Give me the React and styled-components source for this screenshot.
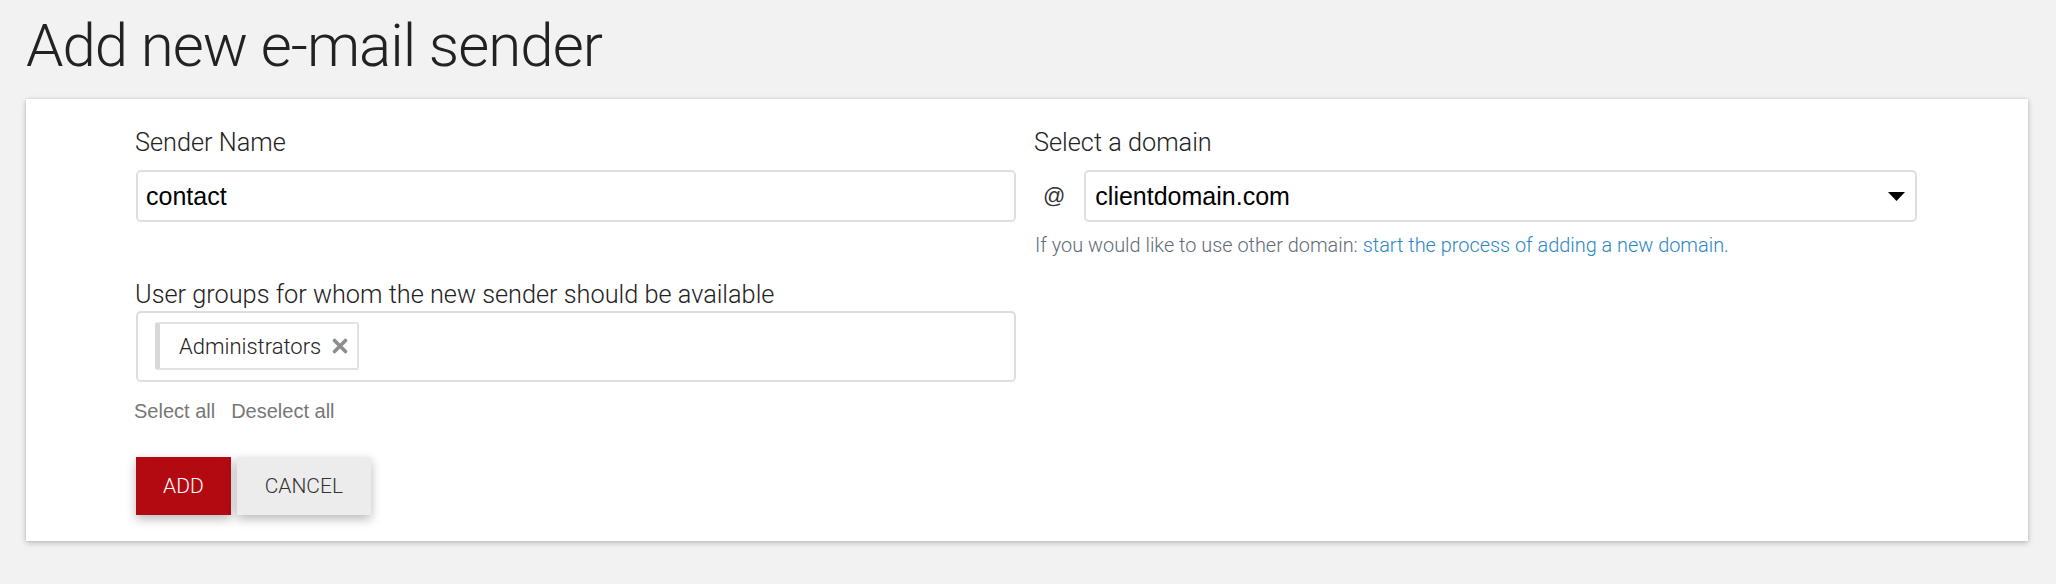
import React from "react";
import styled, { createGlobalStyle } from "styled-components";

const Global = createGlobalStyle`
  html, body { margin: 0; padding: 0; background: #f2f2f2; }
  body { font-family: Roboto, "Liberation Sans", Arial, sans-serif; color: #222; }
  * { box-sizing: border-box; }
`;

const Page = styled.div`
  padding: 0 28px 20px 26px;
`;

const Title = styled.h1`
  margin: 10px 0 17px;
  font-family: Roboto, sans-serif;
  font-weight: 300;
  font-size: 60px;
  line-height: 72px;
  letter-spacing: -1px;
  color: #222;
`;

const Card = styled.div`
  background: #fff;
  padding: 30px 111px 26px 110px;
  box-shadow: 0 2px 6px rgba(0, 0, 0, 0.22), 0 0 2px rgba(0, 0, 0, 0.12);
`;

const Grid = styled.div`
  display: grid;
  grid-template-columns: 880px 882px;
  column-gap: 19px;
  row-gap: 23px;
  align-items: start;
`;

const Field = styled.div`
  display: flex;
  flex-direction: column;
`;

const Label = styled.label`
  font-family: Roboto, sans-serif;
  font-weight: 300;
  font-size: 25.3px;
  line-height: 28px;
  color: #222;
  margin-left: -1px;
  margin-bottom: ${(p) => p.$gap || 13}px;
`;

const Input = styled.div`
  height: 52px;
  border: 2px solid #dedede;
  border-radius: 5px;
  display: flex;
  align-items: center;
  padding: 0 8px;
  font-family: "Liberation Sans", Arial, sans-serif;
  font-size: 25px;
  color: #000;
  background: #fff;
`;

const DomainRow = styled.div`
  display: flex;
  align-items: center;
`;

const At = styled.span`
  font-family: "Liberation Sans", Arial, sans-serif;
  font-size: 22px;
  color: #333;
  margin: 0 19px 0 8px;
`;

const Select = styled(Input)`
  flex: 1;
  justify-content: space-between;
  padding: 0 10px 0 9px;
`;

const Help = styled.div`
  margin-top: 12px;
  font-family: Roboto, sans-serif;
  font-weight: 300;
  font-size: 19.9px;
  line-height: 24px;
  color: #5f6b75;
`;

const Link = styled.a`
  color: #2a86c6;
  text-decoration: none;
`;

const MultiBox = styled.div`
  height: 71px;
  border: 2px solid #dedede;
  border-radius: 5px;
  padding: 9px 17px;
  display: flex;
  align-items: flex-start;
`;

const Tag = styled.span`
  height: 48px;
  display: inline-flex;
  align-items: center;
  gap: 11px;
  padding: 0 9px 0 19px;
  border: 2px solid #e2e2e2;
  border-left: 5px solid #d8d8d8;
  border-radius: 3px;
  font-family: Roboto, sans-serif;
  font-weight: 300;
  font-size: 22px;
  color: #222;
`;

const Actions = styled.div`
  display: flex;
  gap: 16px;
  margin: 18px 0 0 -2px;
`;

const TextLink = styled.a`
  font-family: "Liberation Sans", Arial, sans-serif;
  font-size: 20px;
  line-height: 22px;
  color: #777;
  text-decoration: none;
`;

const ButtonRow = styled.div`
  display: flex;
  gap: 6px;
  margin-top: 35px;
`;

const Button = styled.button`
  height: 58px;
  padding: 0 ${(p) => (p.$primary ? 27 : 28)}px;
  border: none;
  border-radius: 0;
  font-family: Roboto, sans-serif;
  font-weight: 300;
  font-size: 21px;
  text-transform: uppercase;
  background: ${(p) => (p.$primary ? "#b30a12" : "#ececec")};
  color: ${(p) => (p.$primary ? "#fff" : "#333")};
  box-shadow: 0 4px 10px rgba(0, 0, 0, 0.28);
  cursor: pointer;
`;

const Caret = () => (
  <svg width="17" height="9" viewBox="0 0 17 9">
    <path d="M0 0 H17 L8.5 9 Z" fill="#000" />
  </svg>
);

const Remove = () => (
  <svg width="16" height="16" viewBox="0 0 16 16">
    <path d="M2.5 2.5 L13.5 13.5 M13.5 2.5 L2.5 13.5" stroke="#8d8d8d" strokeWidth="3.6" strokeLinecap="round" />
  </svg>
);

export default function App() {
  return (
    <Page>
      <Global />
      <Title>Add new e-mail sender</Title>
      <Card>
        <Grid>
          <Field>
            <Label>Sender Name</Label>
            <Input>contact</Input>
          </Field>
          <Field>
            <Label>Select a domain</Label>
            <DomainRow>
              <At>@</At>
              <Select>
                <span>clientdomain.com</span>
                <Caret />
              </Select>
            </DomainRow>
            <Help>
              If you would like to use other domain:{" "}
              <Link href="#">start the process of adding a new domain.</Link>
            </Help>
          </Field>
          <Field>
            <Label $gap={2}>User groups for whom the new sender should be available</Label>
            <MultiBox>
              <Tag>
                Administrators
                <Remove />
              </Tag>
            </MultiBox>
            <Actions>
              <TextLink href="#">Select all</TextLink>
              <TextLink href="#">Deselect all</TextLink>
            </Actions>
          </Field>
        </Grid>
        <ButtonRow>
          <Button $primary>Add</Button>
          <Button>Cancel</Button>
        </ButtonRow>
      </Card>
    </Page>
  );
}
